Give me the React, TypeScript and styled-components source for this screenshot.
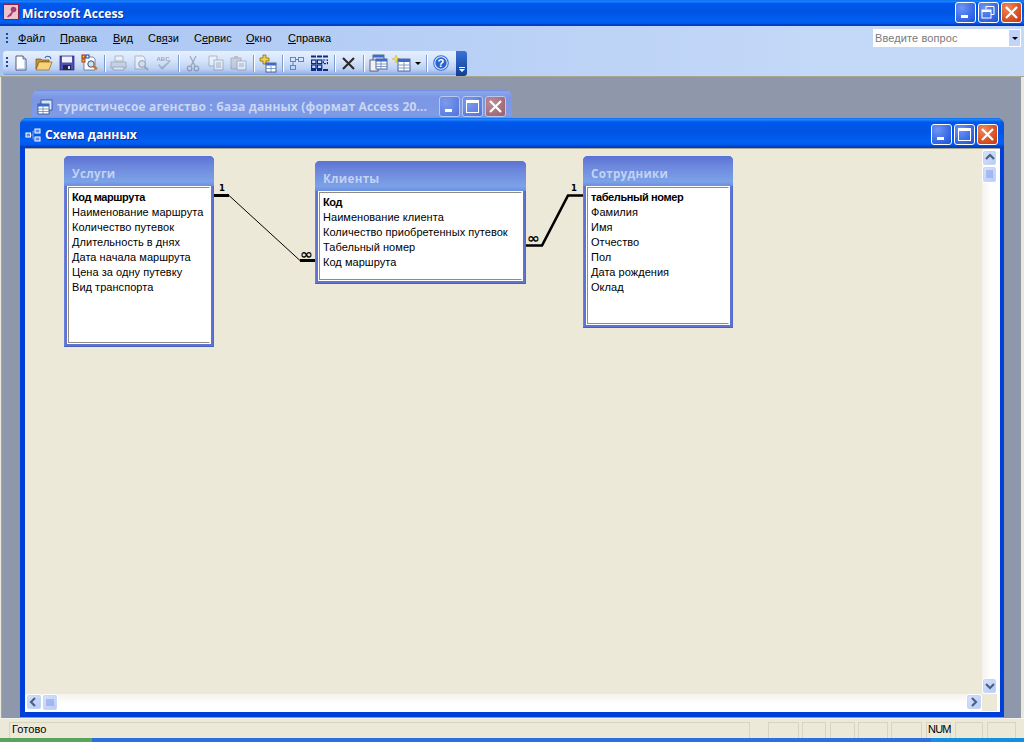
import React from "react";
import styled, { createGlobalStyle } from "styled-components";

const Global = createGlobalStyle`
  html, body { margin: 0; padding: 0; background: #ece9d8; }
  * { box-sizing: border-box; }
`;

const UI = `"Liberation Sans", Arial, sans-serif`;
const HEAD = `"Open Sans", "Liberation Sans", sans-serif`;

const Root = styled.div`
  width: 1024px; height: 742px; overflow: hidden; display: flex; flex-direction: column;
  font-family: ${UI}; font-size: 11px; color: #000; background: #ece9d8;
`;

const BLUE_BAR = `linear-gradient(to bottom, #0a6af0 0, #1e86fb 5%, #0058ec 14%, #0054e3 45%, #0060f4 80%, #0058ea 90%, #0041c8 94%, #003cc4 100%)`;

const TitleBar = styled.header`
  height: 26px; flex: none; display: flex; align-items: center; padding: 0 2px 2px 3px; background: ${BLUE_BAR};
`;
const AppIcon = styled.svg`width: 16px; height: 16px; flex: none; margin-right: 3px;`;
const AppTitle = styled.div`
  flex: 1; color: #fff; font: bold 12.2px ${HEAD}; text-shadow: 1px 1px #0f2a99; white-space: nowrap; padding-top: 3px;
`;
const WinButtons = styled.div`display: flex; gap: 2px; flex: none;`;
const WinBtn = styled.div<{ $kind: "blue" | "red"; $dim?: boolean }>`
  width: 21px; height: 21px; border: 1px solid #fff; border-radius: 3px; display: flex; align-items: center; justify-content: center;
  background: ${(p) =>
    p.$kind === "red"
      ? p.$dim
        ? "radial-gradient(circle at 30% 30%, #c08a96, #a26b78 70%, #95606e)"
        : "radial-gradient(circle at 30% 25%, #ee8a5e, #dc5526 55%, #c23a10)"
      : p.$dim
      ? "radial-gradient(circle at 30% 30%, #7d9bec, #5c7fe0 70%, #4d70d8)"
      : "radial-gradient(circle at 30% 25%, #6f95f5, #3c6ee8 55%, #1f4fd6)"};
  ${(p) => p.$dim && "border-color: #b9c8f0;"}
  svg { display: block; }
`;

const MenuBand = styled.nav`
  height: 24px; flex: none; display: flex; align-items: center; position: relative; padding-left: 6px;
  background: linear-gradient(to right, #a9c5f2 0, #b4cdf5 30%, #c4d8f8 80%, #c4d8f8 100%);
`;
const Grip = styled.span`
  width: 2px; height: 11px; flex: none; margin-right: 10px;
  background: repeating-linear-gradient(to bottom, #1c46a8 0 2px, transparent 2px 4px);
`;
const MenuItem = styled.span<{ $w: number }>`
  width: ${(p) => p.$w}px; flex: none; font-size: 11px;
  u { text-underline-offset: 1px; }
`;
const AskBox = styled.div`
  margin-left: auto; margin-right: 3px; width: 148px; height: 18px; background: #fff; display: flex; align-items: center;
  padding: 0 1px 0 2px; color: #7a7a7a; letter-spacing: 0.1px;
  span { flex: 1; }
`;
const AskBtn = styled.div`
  width: 11px; height: 16px; background: #c1d3fb; display: flex; align-items: center; justify-content: center;
`;
const DownTri = styled.i`
  width: 0; height: 0; border: 3px solid transparent; border-top: 3px solid #000; border-bottom: 0; display: block;
`;

const ToolBand = styled.div`
  height: 27px; flex: none; display: flex; padding: 1px 0 0 3px;
  background: linear-gradient(to right, #a9c5f2 0, #b4cdf5 30%, #c4d8f8 80%, #c4d8f8 100%);
  border-bottom: 1px solid #a8a593;
`;
const Toolbar = styled.div`
  width: 453px; height: 24px; display: flex; align-items: center; padding-left: 3px; border-radius: 3px 0 0 3px;
  background: linear-gradient(to bottom, #e6f0fd 0, #d5e4fb 40%, #bcd0f4 75%, #92b0e6 96%, #6e8fd0 100%);
`;
const ToolGrip = styled(Grip)`margin-right: 1px; height: 12px;`;
const ToolBtn = styled.div<{ $off?: boolean; $w?: number }>`
  width: ${(p) => p.$w ?? 23}px; height: 22px; flex: none; display: flex; align-items: center; justify-content: center;
  ${(p) => p.$off && "opacity: .42; filter: saturate(.35);"}
`;
const ToolSep = styled.span<{ $w?: number }>`
  width: ${(p) => p.$w ?? 6}px; height: 17px; flex: none; display: flex; justify-content: center;
  &::before { content: ""; width: 1px; height: 100%; background: #7e9bd0; box-shadow: 1px 0 #fff; }
`;
const ToolEnd = styled.div`
  width: 11px; height: 25px; border-radius: 0 3px 3px 0; display: flex; flex-direction: column; align-items: center; justify-content: flex-end; padding-bottom: 4px; gap: 1px;
  background: linear-gradient(to bottom, #3c73d4 0, #2458b8 50%, #0f3d96 100%);
`;
const EndBar = styled.i`width: 6px; height: 1px; background: #fff; display: block;`;
const EndTri = styled.i`width: 0; height: 0; border: 3px solid transparent; border-top: 3px solid #fff; border-bottom: 0; display: block;`;

const Workspace = styled.main`
  flex: 1; position: relative; background: #8f98ab; overflow: hidden;
  border-left: 1px solid #ece9d8; border-right: 3px solid #ece9d8; box-shadow: inset 1px 0 #a8a593;
`;

const MdiWindow = styled.section<{ $x: number; $y: number; $w: number; $h: number; $dim?: boolean }>`
  position: absolute; left: ${(p) => p.$x}px; top: ${(p) => p.$y}px; width: ${(p) => p.$w}px; height: ${(p) => p.$h}px;
  border-radius: 7px 7px 0 0; display: flex; flex-direction: column; overflow: hidden;
  background: ${(p) => (p.$dim ? "#7b93e0" : "#0040d8")};
`;
const MdiTitle = styled.div<{ $dim?: boolean }>`
  height: 30px; flex: none; display: flex; align-items: center; padding: 3px 6px 0 5px;
  background: ${(p) =>
    p.$dim
      ? "linear-gradient(to bottom, #6f8be2 0, #8aa6ee 6%, #7c96e4 25%, #7e9be6 85%, #6d86d8 100%)"
      : BLUE_BAR};
`;
const MdiIcon = styled.svg`width: 16px; height: 16px; flex: none; margin-right: 4px;`;
const MdiCaption = styled.div<{ $dim?: boolean }>`
  flex: 1; min-width: 0; white-space: nowrap; font: bold ${(p) => (p.$dim ? "12px" : "12.2px")} ${HEAD};
  color: ${(p) => (p.$dim ? "#c9d6f4" : "#fff")};
  letter-spacing: ${(p) => (p.$dim ? "0.16px" : "0")};
  ${(p) => !p.$dim && "text-shadow: 1px 1px #0f2a99;"}
`;
const MdiBody = styled.div`
  flex: 1; min-height: 0; margin: 0 4px 5px 5px; background: #fff; border-top: 1px solid #a8a593;
  display: grid; grid-template-columns: 957px 18px; grid-template-rows: 545px 17px;
`;
const Canvas = styled.div`position: relative; background: #ece9d8; overflow: hidden;`;
const VScroll = styled.div`
  display: flex; flex-direction: column; width: 15px; padding-top: 1px;
  background: linear-gradient(to right, #f3f2ec, #fff 60%);
`;
const HScroll = styled.div`
  display: flex; height: 17px; padding-left: 1px;
  background: linear-gradient(to bottom, #f3f2ec, #fff 60%);
`;
const ScrollGap = styled.div`flex: 1;`;
const Corner = styled.div`background: #ece9d8; margin-right: 3px;`;
const ScrollBtn = styled.div<{ $tall?: boolean; $wide?: boolean }>`
  width: ${(p) => (p.$wide ? 16 : 15)}px; height: ${(p) => (p.$tall ? 17 : 16)}px; flex: none;
  border: 1px solid #fff; border-radius: 3px; display: flex; align-items: center; justify-content: center;
  background: linear-gradient(135deg, #d8e3fb, #b7caf8); box-shadow: inset 0 0 0 1px #c8d6f6;
`;

const Node = styled.div<{ $x: number; $y: number; $w: number; $h: number }>`
  position: absolute; left: ${(p) => p.$x}px; top: ${(p) => p.$y}px; width: ${(p) => p.$w}px; height: ${(p) => p.$h}px;
  border-radius: 5px 5px 0 0; padding: 0 3px 3px 3px; display: flex; flex-direction: column;
  background: #5f74d2; box-shadow: inset 0 -1px #4a5fc0, inset 1px 0 #6b80da, inset -1px 0 #5469c8;
`;
const NodeTitle = styled.div`
  height: 30px; flex: none; margin: 0 -3px; padding: 4px 0 0 8px; border-radius: 5px 5px 0 0; display: flex; align-items: center;
  font: bold 11.6px ${HEAD}; color: #c3d2f2; letter-spacing: 0.3px;
  background: linear-gradient(to bottom, #5a72d4 0, #6c86dc 30%, #7ba2e8 85%, #6d8ee0 100%);
`;
const FieldList = styled.ul`
  flex: 1; margin: 1px; padding: 2px 0 0 3px; list-style: none; background: #fff;
  border: 1px solid #8f8c7e; border-right-color: #fff; box-shadow: 0 0 0 1px #fff;
`;
const Field = styled.li<{ $key?: boolean }>`
  height: 15px; line-height: 15px; white-space: nowrap; font-size: 11px;
  font-weight: ${(p) => (p.$key ? 700 : 400)};
  letter-spacing: ${(p) => (p.$key ? "-0.4px" : "0.04px")};
`;
const Links = styled.svg`position: absolute; left: 0; top: 0; width: 100%; height: 100%;`;

const StatusBar = styled.footer`
  height: 20px; flex: none; display: flex; padding: 3px 0 0 9px; background: #ece9d8; border-top: 1px solid #f6f4ea;
`;
const Cell = styled.div<{ $w: number; $ml: number; $tight?: boolean }>`
  width: ${(p) => p.$w}px; margin-left: ${(p) => p.$ml}px; flex: none; height: 17px; line-height: 12px; padding-left: ${(p) => (p.$tight ? 1 : 2)}px;
  border: 1px solid #d8d4c4; border-bottom-color: #e4e1d0;
  letter-spacing: ${(p) => (p.$tight ? "-0.8px" : "0.1px")}; white-space: nowrap;
`;
const TaskStrip = styled.div`
  height: 4px; flex: none;
  background: linear-gradient(to right, #5aa35a 0, #5aa35a 92px, #2d6fe0 92px, #2d6fe0 931px, #1590e0 931px);
`;

/* ---------- icons ---------- */
const Min = ({ c = "#fff" }) => <svg width="13" height="13" viewBox="0 0 13 13"><rect x="2" y="9" width="7" height="3" fill={c} /></svg>;
const Max = ({ c = "#fff" }) => <svg width="15" height="15" viewBox="0 0 15 15"><rect x="1.5" y="1.5" width="12" height="12" fill="none" stroke={c} /><rect x="1" y="1" width="13" height="3" fill={c} /></svg>;
const Restore = () => <svg width="15" height="15" viewBox="0 0 15 15" fill="none" stroke="#fff"><path d="M5 4V1.5h8v8h-3" strokeWidth="1" /><rect x="1" y="5" width="9" height="8" /><path d="M1 6h9" strokeWidth="2" /></svg>;
const Close = ({ c = "#fff" }) => <svg width="15" height="15" viewBox="0 0 15 15"><path d="M2 2l11 11M13 2L2 13" stroke={c} strokeWidth="2.2" /></svg>;

const IconNew = () => <svg width="16" height="16" viewBox="0 0 16 16"><path d="M3 1h7l3 3v11H3z" fill="#fff" stroke="#2c3a66" strokeWidth=".8" /><path d="M10 1v3h3" fill="#d8e0f4" stroke="#2c3a66" strokeWidth=".7" /><path d="M12 5v9H5" stroke="#9fb0d6" fill="none" /></svg>;
const IconOpen = () => <svg width="18" height="16" viewBox="0 0 18 16"><path d="M1 4h5l1 1h7v2H4L1 14z" fill="#c8943a" stroke="#6e5016" strokeWidth=".7" /><path d="M4 7h13l-3 8H1z" fill="#f6d27a" stroke="#8a6420" strokeWidth=".7" /><path d="M10 3c1-2 3-2 5-1l1 2" fill="none" stroke="#3c5ca8" strokeWidth="1.1" /></svg>;
const IconSave = () => <svg width="16" height="16" viewBox="0 0 16 16"><rect x="1" y="1" width="14" height="14" fill="#4d4fb4" stroke="#23246a" strokeWidth=".7" /><rect x="3" y="1.5" width="10" height="6" fill="#f0f2fa" /><rect x="4" y="10" width="8" height="5" fill="#23264c" /><rect x="9" y="11" width="2" height="3" fill="#d8dcea" /></svg>;
const IconResearch = () => <svg width="18" height="18" viewBox="0 0 18 18"><path d="M3 3h9l2 2v11H3z" fill="#fff" stroke="#4a5678" strokeWidth=".7" /><rect x="1" y="1" width="3" height="3" fill="#f4e020" stroke="#b01818" /><rect x="5" y="1" width="3" height="3" fill="#fff" stroke="#1840b0" /><rect x="1" y="5" width="3" height="3" fill="#f4c020" stroke="#a04018" /><circle cx="10" cy="10" r="3.2" fill="#cfe0f4" stroke="#42506c" /><path d="M12 12l4 3" stroke="#c87818" strokeWidth="2.2" /></svg>;
const IconPrint = () => <svg width="17" height="16" viewBox="0 0 17 16"><path d="M5 1h8v5H5z" fill="#fff" stroke="#555" strokeWidth=".8" /><path d="M1 7h15v6H1z" fill="#b8c4d8" stroke="#555" strokeWidth=".8" /><path d="M3 12h11v3H3z" fill="#fff" stroke="#555" strokeWidth=".8" /></svg>;
const IconPreview = () => <svg width="17" height="17" viewBox="0 0 17 17"><path d="M2 1h8l2 2v11H2z" fill="#fff" stroke="#556" strokeWidth=".8" /><circle cx="9" cy="9" r="3.4" fill="#cfe0f4" stroke="#445" /><path d="M11.5 11.5l3.5 3.5" stroke="#667" strokeWidth="2" /></svg>;
const IconSpell = () => <svg width="17" height="17" viewBox="0 0 17 17"><text x="0.5" y="6" fontFamily="Liberation Sans, sans-serif" fontSize="6" fontWeight="700" fill="#445">ABC</text><path d="M2 10l4 5 9-9-1-1-8 7-3-3z" fill="#6b7a94" /></svg>;
const IconCut = () => <svg width="14" height="17" viewBox="0 0 14 17" fill="none" stroke="#445a88" strokeWidth="1.3"><path d="M4 1l5 10M10 1L5 11" /><circle cx="3.6" cy="13.5" r="2.3" /><circle cx="10.4" cy="13.5" r="2.3" /></svg>;
const IconCopy = () => <svg width="16" height="16" viewBox="0 0 16 16"><path d="M1 1h8v10H1z" fill="#fff" stroke="#556" strokeWidth=".8" /><path d="M6 5h9v10H6z" fill="#fff" stroke="#556" strokeWidth=".8" /><path d="M8 8h5M8 10h5M8 12h5" stroke="#778" /></svg>;
const IconPaste = () => <svg width="17" height="16" viewBox="0 0 17 16"><path d="M1 3h10v11H1z" fill="#b8b6b0" stroke="#556" strokeWidth=".8" /><rect x="4" y="1" width="4" height="3" fill="#889" /><path d="M7 6h9v9H7z" fill="#fff" stroke="#556" strokeWidth=".8" /><path d="M9 9h5M9 11h5" stroke="#778" /></svg>;
const MiniTable = ({ x, y }: { x: number; y: number }) => <g transform={`translate(${x} ${y})`}><rect width="10" height="9" fill="#fff" stroke="#2c4a88" strokeWidth=".8" /><rect width="10" height="2.5" fill="#3c6cc4" /><path d="M0 5.5h10M5 3v6" stroke="#6a84b8" strokeWidth=".8" /></g>;
const IconAdd = () => <svg width="19" height="19" viewBox="0 0 19 19"><path d="M5 1h3v3h3v3H8v3H5V7H2V4h3z" fill="#f0d050" stroke="#8a6a10" strokeWidth=".8" /><MiniTable x={8} y={9} /></svg>;
const IconRel = () => <svg width="14" height="13" viewBox="0 0 14 13" fill="none" stroke="#5f86c4"><rect x=".5" y=".5" width="5" height="4" /><rect x="8.5" y=".5" width="5" height="4" /><rect x=".5" y="8.5" width="5" height="4" /><path d="M5.5 2.5h3M3 4.5v4" /></svg>;
const IconRelAll = () => <svg width="17" height="16" viewBox="0 0 17 16"><g fill="none" stroke="#0c2a88" strokeWidth="1.2"><rect x=".6" y="5" width="4.4" height="3.6" /><rect x="6.4" y="5" width="4.4" height="3.6" /><rect x="12.4" y="5" width="4" height="3.6" strokeDasharray="2 1" /><rect x=".6" y="10" width="4.4" height="3.6" /><rect x="6.4" y="10" width="4.4" height="3.6" /></g><path d="M0 1.5h17M0 15h17" stroke="#0c2a88" strokeWidth="2" strokeDasharray="5 1" /></svg>;
const IconX = () => <svg width="15" height="15" viewBox="0 0 15 15"><path d="M2 2l11 11M13 2L2 13" stroke="#2a2a2a" strokeWidth="2.1" /></svg>;
const IconDb = () => <svg width="19" height="19" viewBox="0 0 19 19"><rect x="4" y="1" width="11" height="12" fill="#d8e4f8" stroke="#2c4a88" strokeWidth=".8" /><rect x="4" y="1" width="11" height="2.5" fill="#3c6cc4" /><rect x="1" y="6" width="8" height="11" fill="#eef2fa" stroke="#445" strokeWidth=".8" /><rect x="7" y="5" width="11" height="10" fill="#fff" stroke="#2c4a88" strokeWidth=".8" /><rect x="7" y="5" width="11" height="2.5" fill="#3c6cc4" /><path d="M7 10h11M7 12.5h11M12 7v8" stroke="#6a84b8" strokeWidth=".8" /></svg>;
const IconNewObj = () => <svg width="19" height="17" viewBox="0 0 19 17"><path d="M4 0l1 3 3 1-3 1-1 3-1-3-3-1 3-1z" fill="#f4e050" stroke="#d8b020" strokeWidth=".5" /><rect x="6" y="4" width="12" height="12" fill="#fff" stroke="#2c4a88" strokeWidth=".8" /><rect x="6" y="4" width="12" height="3" fill="#3c6cc4" /><path d="M6 10h12M6 13h12M12 7v9" stroke="#6a84b8" strokeWidth=".8" /></svg>;
const IconHelp = () => <svg width="16" height="16" viewBox="0 0 18 18"><circle cx="9" cy="9" r="8.2" fill="#e8f0fc" stroke="#2f6de0" strokeWidth="1.2" /><circle cx="9" cy="9" r="6.4" fill="#2a62d4" /><text x="9" y="13.5" textAnchor="middle" fontFamily="Liberation Sans, sans-serif" fontSize="12.5" fontWeight="700" fill="#fff">?</text></svg>;

const Chevron = ({ dir }: { dir: "up" | "down" | "left" | "right" }) => {
  const d = { up: "M2 7l4-4 4 4", down: "M2 4l4 4 4-4", left: "M7 2L3 6l4 4", right: "M4 2l4 4-4 4" }[dir];
  return <svg width="12" height="12" viewBox="0 0 12 12"><path d={d} fill="none" stroke="#4d6185" strokeWidth="2.2" /></svg>;
};
const ThumbLines = ({ vertical }: { vertical?: boolean }) => (
  <svg width="9" height="9" viewBox="0 0 9 9">
    <path d={vertical ? "M1 1h7M1 3h7M1 5h7M1 7h7" : "M1 1v7M3 1v7M5 1v7M7 1v7"} stroke="#7f9ae6" strokeWidth="1" />
  </svg>
);

const AccessLogo = () => (
  <AppIcon viewBox="0 0 16 16">
    <rect x=".5" y=".5" width="15" height="15" fill="#ecc4cc" stroke="#8a2040" />
    <circle cx="10.5" cy="5.5" r="2.8" fill="#a83a78" />
    <path d="M9 7.5l-5 5 1.2 1L7 12l1 .6.6-1.8 1.6-2.4z" fill="#a83a78" />
  </AppIcon>
);

const tables = [
  { name: "Услуги", x: 39, y: 7, w: 150, h: 191, fields: ["Код маршрута", "Наименование маршрута", "Количество путевок", "Длительность в днях", "Дата начала маршрута", "Цена за одну путевку", "Вид транспорта"] },
  { name: "Клиенты", x: 290, y: 12, w: 211, h: 123, fields: ["Код", "Наименование клиента", "Количество приобретенных путевок", "Табельный номер", "Код маршрута"] },
  { name: "Сотрудники", x: 558, y: 7, w: 150, h: 172, fields: ["табельный номер", "Фамилия", "Имя", "Отчество", "Пол", "Дата рождения", "Оклад"] },
];

const menus: [string, string, string, number][] = [
  ["", "Ф", "айл", 42], ["", "П", "равка", 53], ["", "В", "ид", 35], ["Св", "я", "зи", 46],
  ["С", "е", "рвис", 52], ["", "О", "кно", 42], ["", "С", "правка", 60],
];
const cells: [number, number, string?][] = [
  [741, 0, "Готово"], [31, 18], [24, 3], [25, 4], [30, 3], [31, 3], [25, 4, "NUM"], [28, 4], [29, 4],
];

export default function App() {
  return (
    <Root>
      <Global />
      <TitleBar>
        <AccessLogo />
        <AppTitle>Microsoft Access</AppTitle>
        <WinButtons>
          <WinBtn $kind="blue"><Min /></WinBtn>
          <WinBtn $kind="blue"><Restore /></WinBtn>
          <WinBtn $kind="red"><Close /></WinBtn>
        </WinButtons>
      </TitleBar>
      <MenuBand>
        <Grip />
        {menus.map(([a, u, b, w]) => (
          <MenuItem key={a + u + b} $w={w}>{a}<u>{u}</u>{b}</MenuItem>
        ))}
        <AskBox>
          <span>Введите вопрос</span>
          <AskBtn><DownTri /></AskBtn>
        </AskBox>
      </MenuBand>
      <ToolBand>
        <Toolbar>
          <ToolGrip />
          <ToolBtn><IconNew /></ToolBtn>
          <ToolBtn><IconOpen /></ToolBtn>
          <ToolBtn><IconSave /></ToolBtn>
          <ToolBtn><IconResearch /></ToolBtn>
          <ToolSep />
          <ToolBtn $off><IconPrint /></ToolBtn>
          <ToolBtn $off><IconPreview /></ToolBtn>
          <ToolBtn $off><IconSpell /></ToolBtn>
          <ToolSep $w={5} />
          <ToolBtn $off><IconCut /></ToolBtn>
          <ToolBtn $off><IconCopy /></ToolBtn>
          <ToolBtn $off><IconPaste /></ToolBtn>
          <ToolSep />
          <ToolBtn><IconAdd /></ToolBtn>
          <ToolSep />
          <ToolBtn><IconRel /></ToolBtn>
          <ToolBtn><IconRelAll /></ToolBtn>
          <ToolSep />
          <ToolBtn><IconX /></ToolBtn>
          <ToolSep $w={7} />
          <ToolBtn><IconDb /></ToolBtn>
          <ToolBtn><IconNewObj /></ToolBtn>
          <ToolBtn $w={10}><DownTri /></ToolBtn>
          <ToolSep />
          <ToolBtn><IconHelp /></ToolBtn>
        </Toolbar>
        <ToolEnd><EndBar /><EndTri /></ToolEnd>
      </ToolBand>
      <Workspace>
        <MdiWindow $x={31} $y={13} $w={480} $h={60} $dim>
          <MdiTitle $dim>
            <MdiIcon viewBox="0 0 16 16">
              <rect x="4" y="1" width="11" height="10" fill="#d8e4f8" stroke="#2c4a88" strokeWidth=".8" />
              <rect x="1" y="5" width="11" height="10" fill="#fff" stroke="#2c4a88" strokeWidth=".8" />
              <rect x="1" y="5" width="11" height="2.5" fill="#3c6cc4" />
              <path d="M1 10h11M1 12.5h11M6 7v8" stroke="#6a84b8" strokeWidth=".8" />
            </MdiIcon>
            <MdiCaption $dim>туристичесое агенство : база данных (формат Access 20...</MdiCaption>
            <WinButtons>
              <WinBtn $kind="blue" $dim><Min /></WinBtn>
              <WinBtn $kind="blue" $dim><Max /></WinBtn>
              <WinBtn $kind="red" $dim><Close /></WinBtn>
            </WinButtons>
          </MdiTitle>
        </MdiWindow>
        <MdiWindow $x={19} $y={41} $w={984} $h={599}>
          <MdiTitle>
            <MdiIcon viewBox="0 0 16 16">
              <g fill="#5f8ae8" stroke="#fff" strokeWidth="1">
                <rect x="1" y="6" width="4.5" height="4" />
                <rect x="10" y="2" width="5" height="4" />
                <rect x="10" y="10" width="5" height="4" />
              </g>
              <path d="M5.5 8H8M8 4v8M8 4h2M8 12h2" stroke="#9fb8f0" fill="none" strokeWidth=".8" />
            </MdiIcon>
            <MdiCaption>Схема данных</MdiCaption>
            <WinButtons>
              <WinBtn $kind="blue"><Min /></WinBtn>
              <WinBtn $kind="blue"><Max /></WinBtn>
              <WinBtn $kind="red"><Close /></WinBtn>
            </WinButtons>
          </MdiTitle>
          <MdiBody>
            <Canvas>
              <Links>
                <path d="M189 46.5h15" stroke="#000" strokeWidth="3" />
                <path d="M204 46.5L275 111.5" stroke="#000" strokeWidth="1" fill="none" />
                <path d="M275 111.5h15" stroke="#000" strokeWidth="3" />
                <text x="197" y="42" fontFamily="DejaVu Sans, sans-serif" fontWeight="700" fontSize="8.5" fill="#000" textAnchor="middle">1</text>
                <text x="275" y="110" fontFamily="DejaVu Sans, sans-serif" fontWeight="700" fontSize="14" fill="#000" textLength="13" lengthAdjust="spacingAndGlyphs">∞</text>
                <path d="M501 96.5h16L543 46.5h15" stroke="#000" strokeWidth="2.6" fill="none" />
                <text x="549" y="42" fontFamily="DejaVu Sans, sans-serif" fontWeight="700" fontSize="8.5" fill="#000" textAnchor="middle">1</text>
                <text x="502" y="94" fontFamily="DejaVu Sans, sans-serif" fontWeight="700" fontSize="14" fill="#000" textLength="13" lengthAdjust="spacingAndGlyphs">∞</text>
              </Links>
              {tables.map((t) => (
                <Node key={t.name} $x={t.x} $y={t.y} $w={t.w} $h={t.h}>
                  <NodeTitle>{t.name}</NodeTitle>
                  <FieldList>
                    {t.fields.map((f, i) => (
                      <Field key={f} $key={i === 0}>{f}</Field>
                    ))}
                  </FieldList>
                </Node>
              ))}
            </Canvas>
            <VScroll>
              <ScrollBtn><Chevron dir="up" /></ScrollBtn>
              <ScrollBtn $tall><ThumbLines vertical /></ScrollBtn>
              <ScrollGap />
              <ScrollBtn><Chevron dir="down" /></ScrollBtn>
            </VScroll>
            <HScroll>
              <ScrollBtn $wide><Chevron dir="left" /></ScrollBtn>
              <ScrollBtn $wide $tall><ThumbLines /></ScrollBtn>
              <ScrollGap />
              <ScrollBtn $wide><Chevron dir="right" /></ScrollBtn>
            </HScroll>
            <Corner />
          </MdiBody>
        </MdiWindow>
      </Workspace>
      <StatusBar>
        {cells.map(([w, ml, t], i) => (
          <Cell key={i} $w={w} $ml={ml} $tight={t === "NUM"}>{t}</Cell>
        ))}
      </StatusBar>
      <TaskStrip />
    </Root>
  );
}
